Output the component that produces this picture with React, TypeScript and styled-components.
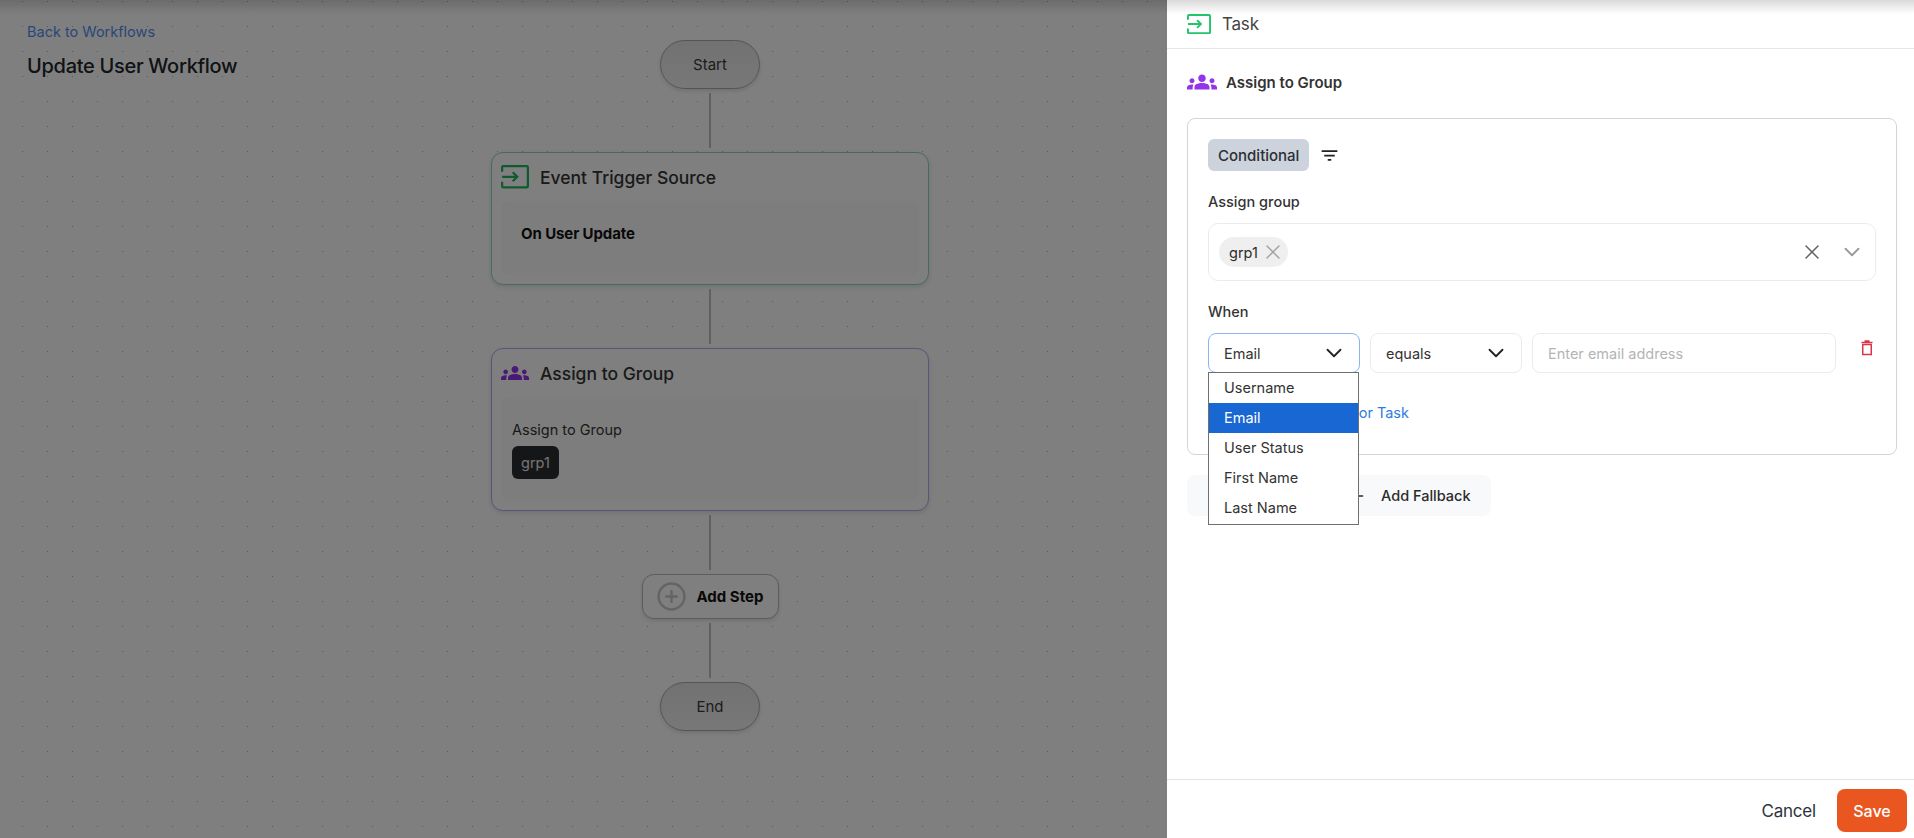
import React from 'react'
import styled, { createGlobalStyle } from 'styled-components'
import { ChevronDown, CirclePlus, Plus, X } from 'lucide-react'
import { MdFilterList, MdGroups } from 'react-icons/md'

const fieldOptions = ['Username', 'Email', 'User Status', 'First Name', 'Last Name']

const TaskIcon = ({ size = 28, color = '#22b55f' }: { size?: number; color?: string }) => (
  <svg width={size} height={size * 0.84} viewBox="0 0 25 21" fill="none" stroke={color} strokeWidth="2">
    <path d="M1 6V2a1 1 0 0 1 1-1h21a1 1 0 0 1 1 1v17a1 1 0 0 1-1 1H2a1 1 0 0 1-1-1v-4" />
    <path d="M1 10.5h13M10.5 6.5l4 4-4 4" />
  </svg>
)

const TrashIcon = () => (
  <svg width="12" height="16" viewBox="0 0 12 16" fill="none" stroke="#dc3545" strokeWidth="1.5">
    <path d="M1.75 4.5h8.5v10h-8.5z" />
    <path d="M0.5 2.6h11M3.5 1h5" />
  </svg>
)

export default function App() {
  return (
    <>
      <GlobalStyle />
      <Page>
        <Canvas>
          <CanvasHeader>
            <BackLink>Back to Workflows</BackLink>
            <WorkflowTitle>Update User Workflow</WorkflowTitle>
          </CanvasHeader>
          <Flow>
            <Terminal>Start</Terminal>
            <Connector />
            <NodeCard $accent="#86dcae">
              <NodeHeader>
                <TaskIcon />
                <NodeTitle>Event Trigger Source</NodeTitle>
              </NodeHeader>
              <NodeBody>
                <NodeStrong>On User Update</NodeStrong>
              </NodeBody>
            </NodeCard>
            <Connector />
            <NodeCard $accent="#b9a6f5">
              <NodeHeader>
                <MdGroups size={28} color="#9333ea" />
                <NodeTitle>Assign to Group</NodeTitle>
              </NodeHeader>
              <NodeBody>
                <NodeLabel>Assign to Group</NodeLabel>
                <DarkTag>grp1</DarkTag>
              </NodeBody>
            </NodeCard>
            <Connector />
            <AddStep>
              <CirclePlus size={31} strokeWidth={1.9} color="#c8c8c8" />
              Add Step
            </AddStep>
            <Connector />
            <Terminal>End</Terminal>
          </Flow>
          <Overlay />
        </Canvas>

        <Drawer>
          <DrawerHeader>
            <TaskIcon size={24} color="#22c56b" />
            <DrawerTitle>Task</DrawerTitle>
          </DrawerHeader>
          <DrawerBody>
            <SectionTitle>
              <MdGroups size={30} color="#9333ea" />
              Assign to Group
            </SectionTitle>
            <RuleBox>
              <RuleType>
                <TypeBadge>Conditional</TypeBadge>
                <MdFilterList size={21} color="#222" />
              </RuleType>
              <FieldLabel>Assign group</FieldLabel>
              <GroupInput>
                <Chip>
                  grp1
                  <X size={24} color="#a0a0a0" strokeWidth={1.4} />
                </Chip>
                <InputActions>
                  <X size={24} color="#666" strokeWidth={1.5} />
                  <ChevronDown size={26} color="#999" strokeWidth={1.7} />
                </InputActions>
              </GroupInput>
              <WhenLabel>When</WhenLabel>
              <WhenRow>
                <SelectWrap>
                  <SelectBox $focused>
                    Email
                    <ChevronDown size={26} color="#222" strokeWidth={1.7} />
                  </SelectBox>
                  <OptionList>
                    {fieldOptions.map((option) => (
                      <Option key={option} $selected={option === 'Email'}>
                        {option}
                      </Option>
                    ))}
                  </OptionList>
                </SelectWrap>
                <SelectBox>
                  equals
                  <ChevronDown size={26} color="#222" strokeWidth={1.7} />
                </SelectBox>
                <TextBox>Enter email address</TextBox>
                <DeleteButton>
                  <TrashIcon />
                </DeleteButton>
              </WhenRow>
              <AddLink>or Task</AddLink>
            </RuleBox>
            <ActionRow>
              <ActionButton>
                <Plus size={16} color="#2b2b2b" />
              </ActionButton>
              <ActionButton>
                <Plus size={16} color="#2b2b2b" />
                Add Fallback
              </ActionButton>
            </ActionRow>
          </DrawerBody>
          <DrawerFooter>
            <CancelButton>Cancel</CancelButton>
            <SaveButton>Save</SaveButton>
          </DrawerFooter>
        </Drawer>
      </Page>
    </>
  )
}

const GlobalStyle = createGlobalStyle`
  html, body {
    margin: 0;
    padding: 0;
    height: 100%;
    background: #fff;
    font-family: Inter, "Noto Sans", sans-serif;
    color: #212529;
  }
  * {
    box-sizing: border-box;
  }
`

const Page = styled.div`
  display: flex;
  width: 1914px;
  height: 838px;
  overflow: hidden;
`

const Canvas = styled.div`
  position: relative;
  flex: 0 0 1167px;
  display: grid;
  grid-template-columns: 491px 438px;
  align-items: start;
  background-color: #fff;
  background-image: radial-gradient(circle, #b0b0b0 0.7px, transparent 1px);
  background-size: 25px 25px;
  background-position: 10px 14px;
`

const Overlay = styled.div`
  position: absolute;
  inset: 0;
  background: linear-gradient(rgba(0, 0, 0, 0.58), rgba(0, 0, 0, 0.5) 14px);
`

const CanvasHeader = styled.div`
  padding: 22px 0 0 27px;
`

const BackLink = styled.a`
  display: block;
  font-size: 14.5px;
  line-height: 20px;
  color: #4f8ff0;
`

const WorkflowTitle = styled.h1`
  margin: 11px 0 0;
  font-size: 20px;
  line-height: 26px;
  font-weight: 500;
  letter-spacing: -0.3px;
  color: #212529;
`

const Flow = styled.div`
  display: flex;
  flex-direction: column;
  align-items: center;
  padding-top: 40px;
`

const Terminal = styled.div`
  width: 100px;
  height: 49px;
  display: flex;
  align-items: center;
  justify-content: center;
  border: 1.5px solid #a8a8a8;
  border-radius: 25px;
  background: linear-gradient(#e4e4e4, #f0f0f0);
  box-shadow: 0 2px 4px rgba(0, 0, 0, 0.12);
  font-size: 15px;
  color: #3a3a3a;
`

const Connector = styled.div`
  width: 2px;
  height: 55px;
  margin: 4px 0;
  flex-shrink: 0;
  background: #c0c0c0;
`

const NodeCard = styled.div<{ $accent: string }>`
  width: 438px;
  border: 1.5px solid ${(p) => p.$accent};
  border-radius: 12px;
  background: #fff;
  box-shadow: 0 2px 5px rgba(0, 0, 0, 0.12);
  padding: 0 9px 9px;
`

const NodeHeader = styled.div`
  display: flex;
  align-items: center;
  gap: 11px;
  height: 48px;
`

const NodeTitle = styled.span`
  font-size: 17.5px;
  font-weight: 500;
  color: #333;
`

const NodeBody = styled.div`
  min-height: 74px;
  padding: 23px 11px 22px;
  border-radius: 8px;
  background: #fbfbfb;
`

const NodeStrong = styled.div`
  padding-left: 9px;
  font-size: 15px;
  line-height: 20px;
  font-weight: 700;
  letter-spacing: -0.1px;
  color: #111;
`

const NodeLabel = styled.div`
  font-size: 14.5px;
  line-height: 20px;
  color: #333;
`

const DarkTag = styled.div`
  width: fit-content;
  margin-top: 6px;
  padding: 0 9px;
  border-radius: 6px;
  background: #2a2c30;
  font-size: 14.5px;
  line-height: 33px;
  color: #e8e8e8;
`

const AddStep = styled.div`
  display: flex;
  align-items: center;
  gap: 10px;
  width: 137px;
  height: 45px;
  padding-left: 13px;
  border: 1.5px solid #b8b8b8;
  border-radius: 12px;
  background: #fff;
  box-shadow: 0 2px 4px rgba(0, 0, 0, 0.12);
  font-size: 15px;
  font-weight: 700;
  color: #111;
`

const Drawer = styled.div`
  flex: 0 0 747px;
  display: flex;
  flex-direction: column;
  height: 838px;
  background: #fff;
`

const DrawerHeader = styled.div`
  display: flex;
  align-items: center;
  gap: 11px;
  height: 49px;
  padding: 0 20px;
  border-bottom: 1px solid #e6e6e6;
  background: linear-gradient(#dadada, #fff 14px);
`

const DrawerTitle = styled.span`
  font-size: 17px;
  letter-spacing: -0.2px;
  color: #444;
`

const DrawerBody = styled.div`
  flex: 1;
  padding: 18px 17px 0 20px;
`

const SectionTitle = styled.div`
  display: flex;
  align-items: center;
  gap: 9px;
  height: 30px;
  font-size: 15px;
  font-weight: 600;
  color: #333;
`

const RuleBox = styled.div`
  margin-top: 21px;
  height: 337px;
  padding: 20px 20px 0;
  border: 1.5px solid #d5d5d5;
  border-radius: 8px;
`

const RuleType = styled.div`
  display: flex;
  align-items: center;
  gap: 10px;
`

const TypeBadge = styled.span`
  display: inline-flex;
  align-items: center;
  height: 32px;
  padding: 0 10px;
  border-radius: 6px;
  background: #cdd3dc;
  font-size: 15px;
  font-weight: 500;
  color: #2b2f36;
`

const FieldLabel = styled.div`
  margin-top: 21px;
  font-size: 14.5px;
  line-height: 20px;
  font-weight: 500;
  color: #333;
`

const GroupInput = styled.div`
  display: flex;
  align-items: center;
  justify-content: space-between;
  height: 58px;
  margin-top: 11px;
  padding: 0 10px;
  border: 1.5px solid #e9ecef;
  border-radius: 10px;
`

const Chip = styled.span`
  display: inline-flex;
  align-items: center;
  gap: 3px;
  height: 30px;
  padding: 0 3px 0 10px;
  border-radius: 15px;
  background: #efefef;
  font-size: 14.5px;
  color: #2b2b2b;
`

const InputActions = styled.span`
  display: inline-flex;
  align-items: center;
  gap: 15px;
`

const WhenLabel = styled(FieldLabel)`
  margin-top: 21px;
`

const WhenRow = styled.div`
  display: flex;
  align-items: flex-start;
  gap: 10px;
  margin-top: 11px;
`

const SelectWrap = styled.div`
  position: relative;
`

const SelectBox = styled.div<{ $focused?: boolean }>`
  display: flex;
  align-items: center;
  justify-content: space-between;
  width: 152px;
  height: 40px;
  padding: 0 12px 0 15px;
  border: 1.5px solid ${(p) => (p.$focused ? '#8db4f0' : '#e9ecef')};
  border-radius: 8px;
  font-size: 14.5px;
  color: #333;
`

const OptionList = styled.div`
  position: absolute;
  top: 39px;
  left: 0;
  width: 151px;
  height: 153px;
  border: 1px solid #6f6f6f;
  background: #fff;
  z-index: 2;
`

const Option = styled.div<{ $selected?: boolean }>`
  height: 30px;
  padding-left: 15px;
  font-size: 14.5px;
  line-height: 30px;
  background: ${(p) => (p.$selected ? '#1967d2' : 'transparent')};
  color: ${(p) => (p.$selected ? '#fff' : '#333')};
`

const TextBox = styled.div`
  display: flex;
  align-items: center;
  width: 304px;
  height: 40px;
  padding: 0 15px;
  border: 1.5px solid #e9ecef;
  border-radius: 8px;
  font-size: 14.5px;
  color: #b4b4b4;
`

const DeleteButton = styled.span`
  display: flex;
  margin: 7px 0 0 15px;
`

const AddLink = styled.div`
  margin-top: 30px;
  width: 201px;
  text-align: right;
  font-size: 14.5px;
  line-height: 20px;
  color: #2f7de1;
`

const ActionRow = styled.div`
  display: grid;
  grid-template-columns: 143px 161px;
  width: 304px;
  height: 41px;
  margin-top: 20px;
  border-radius: 8px;
  background: #f8f9fa;
`

const ActionButton = styled.span`
  display: flex;
  align-items: center;
  gap: 15px;
  padding-left: 20px;
  font-size: 14.5px;
  font-weight: 500;
  color: #2b2b2b;
`

const DrawerFooter = styled.div`
  display: flex;
  align-items: center;
  justify-content: flex-end;
  gap: 21px;
  height: 59px;
  padding: 3px 7px 0 0;
  border-top: 1px solid #e3e3e3;
`

const CancelButton = styled.span`
  font-size: 17px;
  letter-spacing: -0.2px;
  color: #2c3440;
`

const SaveButton = styled.span`
  display: flex;
  align-items: center;
  justify-content: center;
  width: 70px;
  height: 43px;
  border-radius: 8px;
  background: #e9561f;
  font-size: 16px;
  font-weight: 500;
  color: #fff;
`
